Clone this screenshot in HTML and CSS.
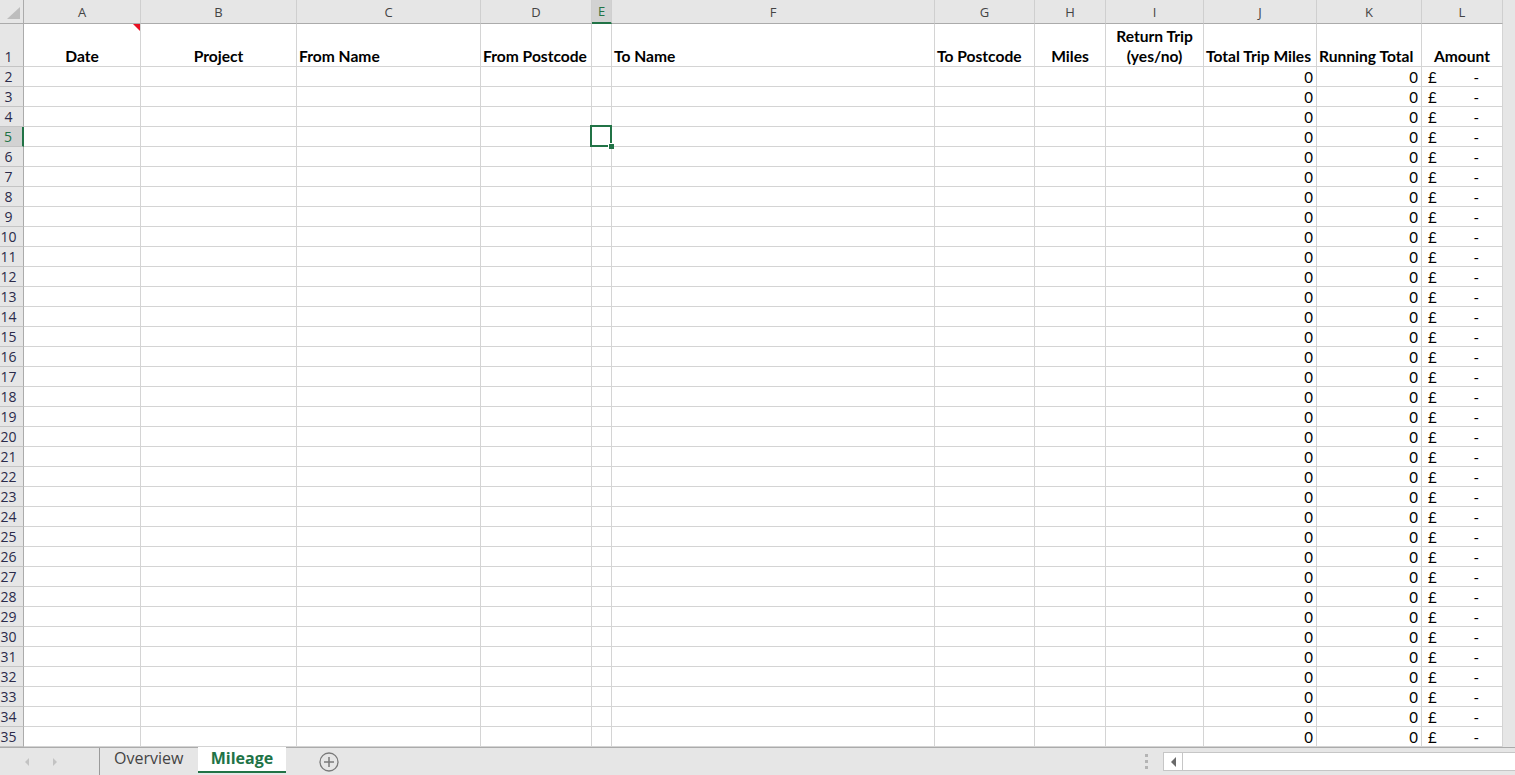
FILE: index.html
```html
<!DOCTYPE html>
<html lang="en">
<head>
    <meta charset="UTF-8">
    <title>Mileage</title>
    <link rel="stylesheet" href="styles.css">
</head>
<body>
    <div class="sheet">
        <table class="grid">
            <colgroup>
                <col style="width:24px"><col style="width:117px"><col style="width:156px"><col style="width:184px">
                <col style="width:111px"><col style="width:20px"><col style="width:323px"><col style="width:100px">
                <col style="width:71px"><col style="width:98px"><col style="width:113px"><col style="width:105px">
                <col style="width:81px">
            </colgroup>
            <thead>
                <tr>
                    <th class="corner"><span class="tri"></span></th>
                    <th>A</th><th>B</th><th>C</th><th>D</th><th class="sel">E</th><th>F</th>
                    <th>G</th><th>H</th><th>I</th><th>J</th><th>K</th><th>L</th>
                </tr>
            </thead>
            <tbody>
                <tr class="titles">
                    <th>1</th>
                    <td class="c note">Date</td>
                    <td class="c">Project</td>
                    <td>From Name</td>
                    <td>From Postcode</td>
                    <td></td>
                    <td>To Name</td>
                    <td>To Postcode</td>
                    <td class="c">Miles</td>
                    <td class="c wrap">Return Trip<br>(yes/no)</td>
                    <td>Total Trip Miles</td>
                    <td>Running Total</td>
                    <td class="c">Amount</td>
                </tr>
                <tr><th>2</th><td></td><td></td><td></td><td></td><td></td><td></td><td></td><td></td><td></td><td class="n">0</td><td class="n">0</td><td class="amt"><span>£</span><span>-</span></td></tr>
                <tr><th>3</th><td></td><td></td><td></td><td></td><td></td><td></td><td></td><td></td><td></td><td class="n">0</td><td class="n">0</td><td class="amt"><span>£</span><span>-</span></td></tr>
                <tr><th>4</th><td></td><td></td><td></td><td></td><td></td><td></td><td></td><td></td><td></td><td class="n">0</td><td class="n">0</td><td class="amt"><span>£</span><span>-</span></td></tr>
                <tr><th class="sel">5</th><td></td><td></td><td></td><td></td><td class="active"></td><td></td><td></td><td></td><td></td><td class="n">0</td><td class="n">0</td><td class="amt"><span>£</span><span>-</span></td></tr>
                <tr><th>6</th><td></td><td></td><td></td><td></td><td></td><td></td><td></td><td></td><td></td><td class="n">0</td><td class="n">0</td><td class="amt"><span>£</span><span>-</span></td></tr>
                <tr><th>7</th><td></td><td></td><td></td><td></td><td></td><td></td><td></td><td></td><td></td><td class="n">0</td><td class="n">0</td><td class="amt"><span>£</span><span>-</span></td></tr>
                <tr><th>8</th><td></td><td></td><td></td><td></td><td></td><td></td><td></td><td></td><td></td><td class="n">0</td><td class="n">0</td><td class="amt"><span>£</span><span>-</span></td></tr>
                <tr><th>9</th><td></td><td></td><td></td><td></td><td></td><td></td><td></td><td></td><td></td><td class="n">0</td><td class="n">0</td><td class="amt"><span>£</span><span>-</span></td></tr>
                <tr><th>10</th><td></td><td></td><td></td><td></td><td></td><td></td><td></td><td></td><td></td><td class="n">0</td><td class="n">0</td><td class="amt"><span>£</span><span>-</span></td></tr>
                <tr><th>11</th><td></td><td></td><td></td><td></td><td></td><td></td><td></td><td></td><td></td><td class="n">0</td><td class="n">0</td><td class="amt"><span>£</span><span>-</span></td></tr>
                <tr><th>12</th><td></td><td></td><td></td><td></td><td></td><td></td><td></td><td></td><td></td><td class="n">0</td><td class="n">0</td><td class="amt"><span>£</span><span>-</span></td></tr>
                <tr><th>13</th><td></td><td></td><td></td><td></td><td></td><td></td><td></td><td></td><td></td><td class="n">0</td><td class="n">0</td><td class="amt"><span>£</span><span>-</span></td></tr>
                <tr><th>14</th><td></td><td></td><td></td><td></td><td></td><td></td><td></td><td></td><td></td><td class="n">0</td><td class="n">0</td><td class="amt"><span>£</span><span>-</span></td></tr>
                <tr><th>15</th><td></td><td></td><td></td><td></td><td></td><td></td><td></td><td></td><td></td><td class="n">0</td><td class="n">0</td><td class="amt"><span>£</span><span>-</span></td></tr>
                <tr><th>16</th><td></td><td></td><td></td><td></td><td></td><td></td><td></td><td></td><td></td><td class="n">0</td><td class="n">0</td><td class="amt"><span>£</span><span>-</span></td></tr>
                <tr><th>17</th><td></td><td></td><td></td><td></td><td></td><td></td><td></td><td></td><td></td><td class="n">0</td><td class="n">0</td><td class="amt"><span>£</span><span>-</span></td></tr>
                <tr><th>18</th><td></td><td></td><td></td><td></td><td></td><td></td><td></td><td></td><td></td><td class="n">0</td><td class="n">0</td><td class="amt"><span>£</span><span>-</span></td></tr>
                <tr><th>19</th><td></td><td></td><td></td><td></td><td></td><td></td><td></td><td></td><td></td><td class="n">0</td><td class="n">0</td><td class="amt"><span>£</span><span>-</span></td></tr>
                <tr><th>20</th><td></td><td></td><td></td><td></td><td></td><td></td><td></td><td></td><td></td><td class="n">0</td><td class="n">0</td><td class="amt"><span>£</span><span>-</span></td></tr>
                <tr><th>21</th><td></td><td></td><td></td><td></td><td></td><td></td><td></td><td></td><td></td><td class="n">0</td><td class="n">0</td><td class="amt"><span>£</span><span>-</span></td></tr>
                <tr><th>22</th><td></td><td></td><td></td><td></td><td></td><td></td><td></td><td></td><td></td><td class="n">0</td><td class="n">0</td><td class="amt"><span>£</span><span>-</span></td></tr>
                <tr><th>23</th><td></td><td></td><td></td><td></td><td></td><td></td><td></td><td></td><td></td><td class="n">0</td><td class="n">0</td><td class="amt"><span>£</span><span>-</span></td></tr>
                <tr><th>24</th><td></td><td></td><td></td><td></td><td></td><td></td><td></td><td></td><td></td><td class="n">0</td><td class="n">0</td><td class="amt"><span>£</span><span>-</span></td></tr>
                <tr><th>25</th><td></td><td></td><td></td><td></td><td></td><td></td><td></td><td></td><td></td><td class="n">0</td><td class="n">0</td><td class="amt"><span>£</span><span>-</span></td></tr>
                <tr><th>26</th><td></td><td></td><td></td><td></td><td></td><td></td><td></td><td></td><td></td><td class="n">0</td><td class="n">0</td><td class="amt"><span>£</span><span>-</span></td></tr>
                <tr><th>27</th><td></td><td></td><td></td><td></td><td></td><td></td><td></td><td></td><td></td><td class="n">0</td><td class="n">0</td><td class="amt"><span>£</span><span>-</span></td></tr>
                <tr><th>28</th><td></td><td></td><td></td><td></td><td></td><td></td><td></td><td></td><td></td><td class="n">0</td><td class="n">0</td><td class="amt"><span>£</span><span>-</span></td></tr>
                <tr><th>29</th><td></td><td></td><td></td><td></td><td></td><td></td><td></td><td></td><td></td><td class="n">0</td><td class="n">0</td><td class="amt"><span>£</span><span>-</span></td></tr>
                <tr><th>30</th><td></td><td></td><td></td><td></td><td></td><td></td><td></td><td></td><td></td><td class="n">0</td><td class="n">0</td><td class="amt"><span>£</span><span>-</span></td></tr>
                <tr><th>31</th><td></td><td></td><td></td><td></td><td></td><td></td><td></td><td></td><td></td><td class="n">0</td><td class="n">0</td><td class="amt"><span>£</span><span>-</span></td></tr>
                <tr><th>32</th><td></td><td></td><td></td><td></td><td></td><td></td><td></td><td></td><td></td><td class="n">0</td><td class="n">0</td><td class="amt"><span>£</span><span>-</span></td></tr>
                <tr><th>33</th><td></td><td></td><td></td><td></td><td></td><td></td><td></td><td></td><td></td><td class="n">0</td><td class="n">0</td><td class="amt"><span>£</span><span>-</span></td></tr>
                <tr><th>34</th><td></td><td></td><td></td><td></td><td></td><td></td><td></td><td></td><td></td><td class="n">0</td><td class="n">0</td><td class="amt"><span>£</span><span>-</span></td></tr>
                <tr><th>35</th><td></td><td></td><td></td><td></td><td></td><td></td><td></td><td></td><td></td><td class="n">0</td><td class="n">0</td><td class="amt"><span>£</span><span>-</span></td></tr>
            </tbody>
        </table>
    </div>

    <div class="tabbar">
        <div class="nav">
            <span class="arrow left"></span>
            <span class="arrow right"></span>
        </div>
        <div class="tab">Overview</div>
        <div class="tab active">Mileage</div>
        <div class="add">
            <svg width="20" height="20" viewBox="0 0 20 20">
                <circle cx="10" cy="10" r="9" fill="none" stroke="#7a7a7a" stroke-width="1.3"/>
                <path d="M10 5v10M5 10h10" stroke="#7a7a7a" stroke-width="1.5"/>
            </svg>
        </div>
        <div class="spacer"></div>
        <div class="dots"><span></span><span></span><span></span></div>
        <div class="hscroll">
            <div class="hbtn"><span class="arrow dark"></span></div>
        </div>
    </div>
</body>
</html>
```

FILE: styles.css
```css
* {
    box-sizing: border-box;
}

body {
    margin: 0;
    height: 775px;
    overflow: hidden;
    background-color: #e6e6e6;
    font-family: Lato, "Liberation Sans", sans-serif;
    display: flex;
    flex-direction: column;
}

.sheet {
    height: 747px;
    overflow: hidden;
}

.grid {
    border-collapse: separate;
    border-spacing: 0;
    table-layout: fixed;
    width: 1503px;
    background-color: #fff;
}

.grid th {
    background-color: #e6e6e6;
    font-family: "Open Sans", "Noto Sans", sans-serif;
    font-size: 13px;
    font-weight: normal;
    color: #444;
    padding: 0;
}

.grid thead th {
    height: 24px;
    border-right: 1px solid #cfcfcf;
    border-bottom: 1px solid #ababab;
}

.grid thead th.corner {
    position: relative;
    border-right: 1px solid #ababab;
}

.tri {
    position: absolute;
    right: 3px;
    bottom: 4px;
    width: 0;
    height: 0;
    border-left: 13px solid transparent;
    border-bottom: 12px solid #bdbdbd;
}

.grid tbody th {
    height: 20px;
    border-right: 1px solid #ababab;
    border-bottom: 1px solid #c4c4c4;
    color: #2b2b4a;
    font-size: 14px;
    text-align: center;
    padding-right: 6px;
    line-height: 18px;
    vertical-align: bottom;
}

.grid th.sel {
    background-color: #d2d2d2;
    color: #217346;
}

.grid thead th.sel {
    border-bottom: 2px solid #217346;
}

.grid tbody th.sel {
    border-right: 2px solid #217346;
}

.grid td {
    height: 20px;
    padding: 0 3px;
    border-right: 1px solid #d4d4d4;
    border-bottom: 1px solid #d4d4d4;
    font-size: 15px;
    line-height: 18px;
    color: #000;
    white-space: nowrap;
    overflow: hidden;
    vertical-align: bottom;
}

.titles th,
.titles td {
    height: 43px;
}

.titles td {
    font-weight: bold;
    font-size: 15.6px;
    padding: 0 2px;
    line-height: 19px;
}

.titles td.c {
    text-align: center;
}

.titles td.wrap {
    white-space: normal;
    line-height: 20px;
}

.titles td.note {
    position: relative;
    overflow: visible;
}

.titles td.note::after {
    content: "";
    position: absolute;
    top: 0;
    right: 0;
    border-left: 7px solid transparent;
    border-top: 7px solid #e81123;
}

.grid td.n {
    text-align: right;
    padding-right: 3px;
}

.grid td.amt {
    padding: 0 23px 0 6px;
}

.amt span:last-child {
    float: right;
}

.grid td.active {
    position: relative;
    overflow: visible;
}

.grid td.active::after {
    content: "";
    position: absolute;
    top: -2px;
    left: -2px;
    right: -1px;
    bottom: -1px;
    border: 2px solid #217346;
    z-index: 2;
}

.grid td.active::before {
    content: "";
    position: absolute;
    right: -3px;
    bottom: -3px;
    width: 5px;
    height: 5px;
    background-color: #217346;
    border-top: 1px solid #fff;
    border-left: 1px solid #fff;
    z-index: 3;
    box-sizing: content-box;
}

.tabbar {
    height: 28px;
    border-top: 1px solid #ababab;
    display: flex;
    align-items: flex-start;
    font-family: "Open Sans", "Noto Sans", sans-serif;
}

.nav {
    width: 100px;
    height: 27px;
    display: flex;
    align-items: center;
    gap: 24px;
    padding-left: 25px;
    border-right: 1px solid #9a9a9a;
}

.arrow {
    width: 0;
    height: 0;
    border-top: 4px solid transparent;
    border-bottom: 4px solid transparent;
}

.arrow.left {
    border-right: 4px solid #c3c3c3;
}

.arrow.right {
    border-left: 4px solid #c3c3c3;
}

.tab {
    height: 26px;
    line-height: 21px;
    font-size: 16px;
    color: #444;
}

.tab:not(.active) {
    width: 98px;
    padding-left: 14px;
}

.tab.active {
    width: 88px;
    text-align: center;
    background-color: #fff;
    color: #217346;
    font-weight: bold;
    border-bottom: 2px solid #217346;
    margin-top: -1px;
    line-height: 22px;
}

.add {
    margin: 4px 0 0 33px;
    height: 20px;
}

.spacer {
    flex: 1;
}

.dots {
    display: flex;
    flex-direction: column;
    gap: 3px;
    margin-top: 6px;
}

.dots span {
    width: 3px;
    height: 3px;
    background-color: #b4b4b4;
}

.hscroll {
    width: 352px;
    height: 19px;
    margin: 4px 0 0 15px;
    background-color: #fff;
    border: 1px solid #c6c6c6;
    border-right: none;
}

.hbtn {
    width: 19px;
    height: 17px;
    border-right: 1px solid #c6c6c6;
    display: flex;
    align-items: center;
    justify-content: center;
}

.arrow.dark {
    border-right: 5px solid #6a6a6a;
    border-top-width: 5px;
    border-bottom-width: 5px;
}
```
